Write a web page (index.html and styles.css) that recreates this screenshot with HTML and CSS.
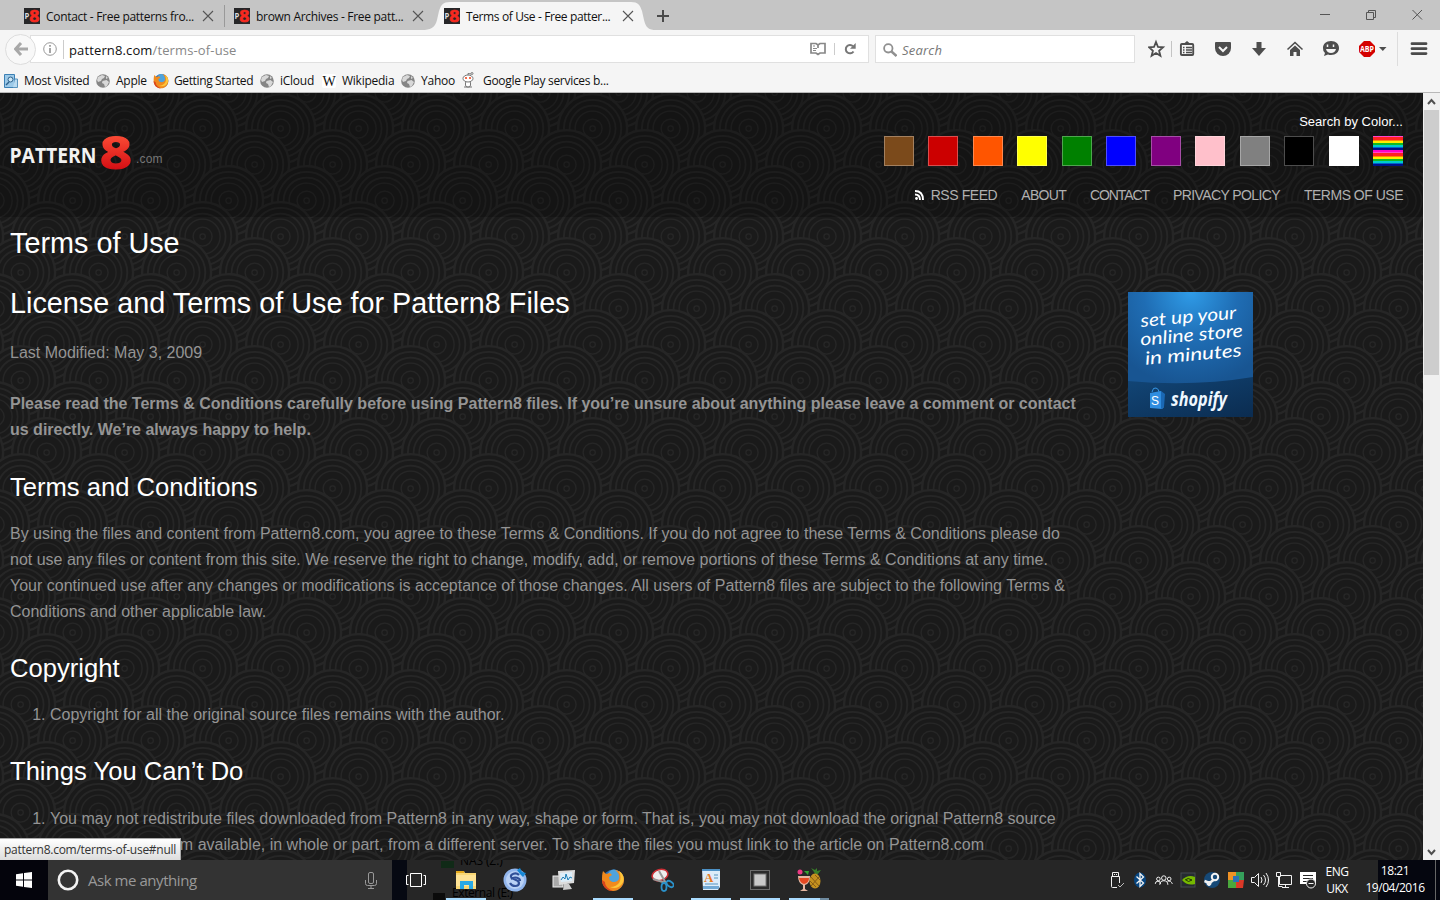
FILE: index.html
```html
<!DOCTYPE html>
<html lang="en">
<head>
<meta charset="utf-8">
<title>Terms of Use - Free patterns</title>
<link rel="stylesheet" href="styles.css">
</head>
<body>
<svg class="defs" width="0" height="0">
  <symbol id="fav" viewBox="0 0 16 16"><rect width="16" height="16" fill="#262628"/><text x=".5" y="10.500" font-family="Open Sans" font-weight="700" font-size="8" fill="#ddd" textLength="4.500" lengthAdjust="spacingAndGlyphs">P</text><text x="5.300" y="13.500" font-family="Open Sans" font-weight="700" font-size="15.500" fill="#f7291f" stroke="#f7291f" stroke-width=".6" textLength="9.800" lengthAdjust="spacingAndGlyphs">8</text></symbol>
  <symbol id="x" viewBox="0 0 12 12"><path d="M1 1l10 10M11 1L1 11" stroke="#555" stroke-width="1.1" fill="none"/></symbol>
  <symbol id="globe" viewBox="0 0 14 14"><circle cx="7" cy="7" r="6.800" fill="#858585"/><path d="M2 3l4-2 3 1-1 2-2 1-1 2-3 1-1-2zM6.500 7l4-1 2.500 2-2 4-2 1-1-3-2-1zM10 2l2 2-2 1z" fill="#d8d8d8"/></symbol>
  <symbol id="fox" viewBox="0 0 24 24"><circle cx="12.500" cy="12" r="10.500" fill="#2a6fb5"/><circle cx="13" cy="8" r="6.500" fill="#4fa3dc"/><path d="M2 3l3 3 4-1 2 2-3 2c0 3 2 5 5 5 2 0 4-1 5-3 1-4-1-7-4-9 6 1 9 5 9 10 0 6-5 11-11 11S1 18 1 12c0-3 0-6 1-9z" fill="#f08a1d"/><path d="M18 3c5 3 6 9 3 13-3 4-8 5-12 3 9 0 13-7 9-16z" fill="#fdc63a"/><path d="M1 12c0 6 4 11 11 11-5-2-8-5-8-9z" fill="#d9441c"/></symbol>
</svg>

<header class="chrome">
  <div class="tabs">
    <div class="tab"><svg class="fav"><use href="#fav"/></svg><span class="t1">Contact - Free patterns fro...</span><svg class="close"><use href="#x"/></svg></div>
    <div class="tab"><svg class="fav"><use href="#fav"/></svg><span class="t2">brown Archives - Free patt...</span><svg class="close"><use href="#x"/></svg></div>
    <div class="tab active"><svg class="shape" viewBox="0 0 240 28"><path d="M0 28c8 0 13-2 15-10l2-9c2-6 4-9 11-9H209c7 0 9 3 11 9l2 9c2 8 5 10 12 10z" fill="#f5f5f5"/></svg><svg class="fav"><use href="#fav"/></svg><span class="t3">Terms of Use - Free patter...</span><svg class="close"><use href="#x"/></svg></div>
    <svg class="plus" viewBox="0 0 12 12"><path d="M6 0v12M0 6h12" stroke="#4a4a4a" stroke-width="2"/></svg>
    <svg class="winbtns" width="104" height="16" viewBox="0 0 104 16"><path d="M0 8.500h10M46.500 6.500h7v7h-7zM48.500 6V4.500h7v7H54M92.500 4l9.500 9.500M102 4l-9.500 9.500" fill="none" stroke="#555"/></svg>
  </div>
  <div class="toolbar">
    <div class="back"><svg width="14" height="14" viewBox="0 0 14 14"><path d="M7 1L1.500 7 7 13M2 7h12" fill="none" stroke="#a8a8a8" stroke-width="3"/></svg></div>
    <div class="url">
      <svg class="info" viewBox="0 0 14 14"><circle cx="7" cy="7" r="6.300" fill="none" stroke="#999"/><path d="M7 6v5M7 3v1.700" stroke="#888" stroke-width="1.500"/></svg>
      <span class="addr">pattern8.com<i>/terms-of-use</i></span>
      <svg class="reader" viewBox="0 0 16 14"><path d="M1 1.500h5l2 1.500 2-1.500h5v9.500h-5l-2 1.500L6 11H1zM8 3v3" fill="none" stroke="#888" stroke-width="1.700"/><path d="M3 4h2M3 6.500h4M3 8.500h3" stroke="#888"/></svg>
      <svg class="reload" viewBox="0 0 12 12"><path d="M9.500 8.500A4.200 4.200 0 1 1 9 3.200" fill="none" stroke="#777" stroke-width="2"/><path d="M11.700 0v5.700H6z" fill="#777"/></svg>
    </div>
    <div class="search"><svg width="14" height="14" viewBox="0 0 14 14"><circle cx="5.300" cy="5.300" r="4.200" fill="none" stroke="#909090" stroke-width="1.800"/><path d="M8.500 8.500l5 4.500" stroke="#909090" stroke-width="2.400"/></svg><span>Search</span></div>
    <svg class="tools" width="292" height="34" viewBox="1148 32 292 34">
      <path d="M1156 42l2 5 5 .3-3.900 3.400 1.300 5.100-4.400-2.800-4.400 2.800 1.300-5.100-3.900-3.400 5-.3z" fill="none" stroke="#4d4d4d" stroke-width="1.800"/>
      <path d="M1171.500 41v16" stroke="#c4c4c4"/><path d="M1397.500 31v35" stroke="#ddd"/>
      <rect x="1180.900" y="44" width="12.300" height="11" rx="1" fill="none" stroke="#4d4d4d" stroke-width="1.900"/><path d="M1184 43.500l3-2.500 3 2.500z" fill="#4d4d4d"/><path d="M1183 47.500h1.500M1186 47.500h6M1183 50h1.500M1186 50h6M1183 52.500h1.500M1186 52.500h6" stroke="#4d4d4d" stroke-width="1.400" fill="none"/>
      <path d="M1216 42h14q1 0 1 1v5a8 8 0 0 1-16 0v-5q0-1 1-1z" fill="#4d4d4d"/><path d="M1219 47l4 4 4-4" fill="none" stroke="#f5f5f5" stroke-width="2"/>
      <path d="M1256.500 42h5v6h4.500l-7 8-7-8h4.500z" fill="#4d4d4d"/>
      <path d="M1287.500 49.500l7.500-7 7.500 7" fill="none" stroke="#4d4d4d" stroke-width="1.600"/><path d="M1290 50l5-4.500 5 4.500v6h-3.500v-4h-3v4h-3.500z" fill="#4d4d4d"/>
      <path d="M1331 41c5 0 8 3 8 7s-3 7-8 7c-1 0-2 0-3-.5l-4 1.500 1-3a6 6 0 0 1-2-5c0-4 3-7 8-7z" fill="#4d4d4d"/><path d="M1327.500 44.500v2.500M1333.500 44.500v2.500" stroke="#f5f5f5" stroke-width="1.500"/><path d="M1326 49h10q-1 4-5 4t-5-4z" fill="#f5f5f5"/>
      <path d="M1364 41h6l5 5v6l-5 5h-6l-5-5v-6z" fill="#d40000"/><text x="1360" y="52.300" font-family="Open Sans" font-weight="700" font-size="9" fill="#fff" textLength="14" lengthAdjust="spacingAndGlyphs">ABP</text><path d="M1379 47h7.500l-3.700 4z" fill="#4d4d4d"/>
      <path d="M1412 43.700h14M1412 48.700h14M1412 53.600h14" stroke="#4a4a4a" stroke-width="2.800" stroke-linecap="round"/>
    </svg>
  </div>
  <nav class="bookmarks">
    <a class="b1"><svg viewBox="0 0 14 14"><path d="M.5.500h10v13H.5z" fill="#9cc9e8" stroke="#3c80b4"/><path d="M11 5h2.500v8.500H9" fill="#b9daf0" stroke="#5a94bd"/><circle cx="6.500" cy="5.500" r="2.500" fill="#cde6f5" stroke="#2e628c"/><path d="M5 8l-3 3" stroke="#2e628c" stroke-width="1.500"/></svg><span>Most Visited</span></a>
    <a class="b2"><svg><use href="#globe"/></svg><span>Apple</span></a>
    <a class="b3"><svg class="foxs"><use href="#fox"/></svg><span>Getting Started</span></a>
    <a class="b4"><svg><use href="#globe"/></svg><span>iCloud</span></a>
    <a class="b5"><svg viewBox="0 0 14 14"><rect width="14" height="14" rx="2" fill="#fff"/><text x=".5" y="11.500" font-family="Liberation Serif" font-size="14" fill="#111" textLength="13" lengthAdjust="spacingAndGlyphs">W</text></svg><span>Wikipedia</span></a>
    <a class="b6"><svg><use href="#globe"/></svg><span>Yahoo</span></a>
    <a class="b7"><svg class="alien" viewBox="0 0 14 16"><path d="M7 5V1.500l3 .5" fill="none" stroke="#777"/><circle cx="11" cy="1.500" r="1" fill="#fff" stroke="#777"/><rect x="4.500" y="9" width="5" height="6" rx="2" fill="#fff" stroke="#777"/><ellipse cx="7" cy="6.500" rx="5" ry="3.500" fill="#fff" stroke="#777"/><circle cx="5" cy="6" r="1.100" fill="#f04a23"/><circle cx="9" cy="6" r="1.100" fill="#f04a23"/><path d="M3 15h8" stroke="#777"/></svg><span>Google Play services b...</span></a>
  </nav>
</header>

<div class="viewport">
  <div class="site">
    <div class="site-head">
      <svg class="logo" width="160" height="42" viewBox="0 0 160 42">
        <defs><linearGradient id="red" x1="0" y1="0" x2="0" y2="1"><stop offset=".2" stop-color="#ff5138"/><stop offset=".8" stop-color="#d40f14"/></linearGradient></defs>
        <text x="-.5" y="31" font-family="Open Sans" font-weight="700" font-size="21" fill="#f2f2f2" textLength="87" lengthAdjust="spacingAndGlyphs">PATTERN</text>
        <text x="90" y="36.700" font-family="Open Sans" font-weight="700" font-size="45.500" fill="url(#red)" stroke="url(#red)" stroke-width="1.200" textLength="32" lengthAdjust="spacingAndGlyphs">8</text>
        <text x="126" y="31" font-family="Liberation Sans" font-size="12" fill="#777" textLength="26.500">.com</text>
      </svg>
      <div class="head-right">
        <div class="by-color">Search by Color...</div>
        <div class="swatches"><b class="brown"></b><b class="red"></b><b class="orange"></b><b class="yellow"></b><b class="green"></b><b class="blue"></b><b class="purple"></b><b class="pink"></b><b class="gray"></b><b class="black"></b><b class="white"></b><b class="rainbow"></b></div>
        <div class="menu"><a class="rss"><svg width="9" height="10" viewBox="0 0 9 10"><circle cx="1.500" cy="8.500" r="1.400" fill="#fff"/><path d="M0 4.500q5 0 5 5.500M0 1q8 0 8 9" fill="none" stroke="#fff" stroke-width="1.900"/></svg>RSS FEED</a><a class="m2">ABOUT</a><a class="m3">CONTACT</a><a class="m4">PRIVACY POLICY</a><a class="m5">TERMS OF USE</a></div>
      </div>
    </div>
    <div class="body">
      <main>
        <h1>Terms of Use</h1>
        <h1 class="lic">License and Terms of Use for Pattern8 Files</h1>
        <p class="mod">Last Modified: May 3, 2009</p>
        <p class="bold">Please read the Terms &amp; Conditions carefully before using Pattern8 files. If you’re unsure about anything please leave a comment or contact<br>us directly. We’re always happy to help.</p>
        <h2>Terms and Conditions</h2>
        <p>By using the files and content from Pattern8.com, you agree to these Terms &amp; Conditions. If you do not agree to these Terms &amp; Conditions please do<br>not use any files or content from this site. We reserve the right to change, modify, add, or remove portions of these Terms &amp; Conditions at any time.<br>Your continued use after any changes or modifications is acceptance of those changes. All users of Pattern8 files are subject to the following Terms &amp;<br>Conditions and other applicable law.</p>
        <h2 class="copy">Copyright</h2>
        <ol><li>Copyright for all the original source files remains with the author.</li></ol>
        <h2 class="things">Things You Can’t Do</h2>
        <ol class="last"><li>You may not redistribute files downloaded from Pattern8 in any way, shape or form. That is, you may not download the orignal Pattern8 source<br>files and make them available, in whole or part, from a different server. To share the files you must link to the article on Pattern8.com</li></ol>
      </main>
      <aside>
        <svg width="125" height="125" viewBox="0 0 125 125">
          <defs><radialGradient id="sky" cx=".5" cy="0" r=".75"><stop offset="0" stop-color="#2f9ce8"/><stop offset=".5" stop-color="#1f6db4"/><stop offset="1" stop-color="#185592"/></radialGradient><linearGradient id="sea" x1="0" y1="0" x2="1" y2="1"><stop offset="0" stop-color="#124677"/><stop offset="1" stop-color="#0b2c50"/></linearGradient></defs>
          <rect width="125" height="125" fill="url(#sky)"/><path d="M0 89q65 6 125-4v40H0z" fill="url(#sea)"/>
          <g font-family="Lato" font-style="italic" fill="#fff" font-size="18" transform="rotate(-5)"><text x="10" y="36" textLength="96" lengthAdjust="spacingAndGlyphs">set up your</text><text x="8" y="54.500" textLength="103" lengthAdjust="spacingAndGlyphs">online store</text><text x="11" y="74" textLength="97" lengthAdjust="spacingAndGlyphs">in minutes</text></g>
          <path d="M24 100q1-5 4-4t3 4" fill="none" stroke="#3597e8"/><path d="M22 101l11-2 3 16-2 2-12-1z" fill="#2f8de0"/><path d="M33 99l4 3-1 13-3 2z" fill="#1a68b4"/><text x="23" y="113" font-family="Liberation Sans" font-size="12" fill="#fff">S</text>
          <text x="43" y="114" font-family="Open Sans" font-weight="700" font-style="italic" font-size="20" fill="#f0f8ff" textLength="56" lengthAdjust="spacingAndGlyphs">shopify</text>
        </svg>
      </aside>
    </div>
  </div>
  <div class="scroll"><svg width="17" height="17" viewBox="0 0 17 17"><path d="M5 11l3.500-4 3.500 4" fill="none" stroke="#505050" stroke-width="2"/></svg><div class="thumb"></div><svg class="down" width="17" height="17" viewBox="0 0 17 17"><path d="M5 7l3.500 4L12 7" fill="none" stroke="#505050" stroke-width="2"/></svg></div>
  <div class="status">pattern8.com/terms-of-use#null</div>
</div>

<footer class="taskbar">
  <div class="start"><svg width="16" height="16" viewBox="0 0 16 16"><path d="M0 2.300l7-1v6.200H0zM8 1.100L16 0v7.500H8zM0 8.500h7v6.200l-7-1zM8 8.500h8V16l-8-1.100z" fill="#fff"/></svg></div>
  <div class="cortana"><svg width="22" height="22" viewBox="0 0 22 22"><circle cx="11" cy="11" r="9.200" fill="none" stroke="#f2f2f2" stroke-width="2.600"/></svg><span>Ask me anything</span><svg class="mic" width="12" height="17" viewBox="0 0 12 17"><rect x="3.500" y=".5" width="5" height="11" rx="1.500" fill="none" stroke="#999"/><path d="M.5 8v3.500q0 2 2 2h7q2 0 2-2V8M6 13.500V16M3 16.500h6" fill="none" stroke="#999"/></svg></div>
  <div class="gap"></div>
  <div class="ghost g1">NAS (Z:)</div><div class="ghost g2">External (E:)</div><div class="ghost g3"></div><div class="ghost g4"></div>
  <div class="apps">
    <div class="view"><svg width="20" height="14" viewBox="0 0 20 14"><path d="M4.500.500h11v13h-11zM2.500 2.500h-2v9h2M17.500 2.500h2v9h-2" fill="none" stroke="#fff"/></svg></div>
    <div class="app on"><svg viewBox="0 0 24 24"><path d="M2 3h8l1 2h11v16H2z" fill="#f9d774"/><path d="M2 3h8v2H2z" fill="#e5a91c"/><path d="M2 7h20v11H2z" fill="#fee395"/><path d="M6 21v-8h13v8h-4v-4h-5v4z" fill="#29a9e6"/></svg></div>
    <div class="app"><svg viewBox="0 0 24 24"><circle cx="12" cy="12" r="11.500" fill="#91b5ec"/><circle cx="12" cy="12" r="9" fill="#b9d1f5"/><path d="M16 7c-3-3-9-1-8 2s8 2 8 6-7 4-9 0M8 11c4-3 9-1 9 2" fill="none" stroke="#304f98" stroke-width="2.200"/><path d="M14 2l3-2 2 4 4 1-3 4-3-3z" fill="#1688d6"/></svg></div>
    <div class="app"><svg viewBox="0 0 24 24"><rect x="1" y="8" width="10" height="11" fill="#aaa" stroke="#eee"/><path d="M6 3l17-1-1 13-15 2z" fill="#ddd"/><path d="M8 5l12-1v9L9 14z" fill="#dcedf8"/><path d="M9 12l2-3 2 2 1-5 2 6 2-3 2 1" fill="none" stroke="#1c7db6"/><path d="M12 16h5l3 5-9 1z" fill="#ccc"/></svg></div>
    <div class="app on"><svg viewBox="0 0 24 24"><use href="#fox"/></svg></div>
    <div class="app"><svg viewBox="0 0 24 24"><ellipse cx="10" cy="7" rx="8" ry="5.500" transform="rotate(-15 10 7)" fill="#eee" stroke="#cc2f36" stroke-width="1.600"/><path d="M9 3l8 14M3 11l13 4" stroke="#999" stroke-width="2"/><ellipse cx="14" cy="19" rx="2.500" ry="4" fill="none" stroke="#2b91c9" stroke-width="1.800"/><ellipse cx="20" cy="16" rx="4" ry="2.500" transform="rotate(35 20 16)" fill="none" stroke="#2b91c9" stroke-width="1.800"/></svg></div>
    <div class="app on"><svg viewBox="0 0 24 24"><path d="M3 1h18v18l-2 3H4z" fill="#dcecf9"/><path d="M3 1h18v2H3z" fill="#4c91c6"/><path d="M4 18h16v3H4z" fill="#72a9d4"/><text x="5" y="14" font-family="Liberation Serif" font-weight="700" font-size="13" fill="#e87b1e">A</text><path d="M15 7h4M15 10h4M6 16h13" stroke="#5793be"/></svg></div>
    <div class="app on"><svg viewBox="0 0 24 24"><rect x="2.500" y="2.500" width="19" height="19" fill="#2b2b2b" stroke="#6b6b6b"/><rect x="6" y="6" width="12" height="12" fill="#c9c9c9" stroke="#777"/></svg></div>
    <div class="app on part"><svg viewBox="0 0 24 24"><path d="M17 4l-3-4 4 2 2-2v3l4-1-3 4h-3z" fill="#39802a"/><ellipse cx="18" cy="13" rx="5.500" ry="7.500" fill="#c4911f"/><path d="M14 9l8 9M13 13l6 6M22 9l-8 9M18 7l5 5" stroke="#8a5e14"/><path d="M1 8h12q0 8-5 9v4l3 2H3l3-2v-4Q1 15 1 8z" fill="#e5b7a2"/><path d="M2 10h10q0 5-5 6-4-1-5-6z" fill="#e54821"/><circle cx="3" cy="4" r="2.500" fill="#ed3984"/><path d="M7 3l5 0-1 4z" fill="#34a332"/></svg></div>
  </div>
  <svg class="tray" width="216" height="24" viewBox="0 0 216 24" fill="none" stroke="#f2f2f2">
    <g transform="translate(4 0)">
    <path d="M7.500 8.500h8v11h-7q-1 0-1-1zM8.500 8V4.500h6V8M10.500 6v1M12.500 6v1"/><rect x="13" y="15" width="5" height="5" stroke="none" fill="#262626"/><path d="M14 17l2 2 4-4" stroke="#bbb"/>
    <ellipse cx="36" cy="12" rx="6" ry="7.500" fill="#07457f" stroke="none"/><path d="M32.500 8.500l7 6.500-3.500 3.500v-13l3.500 3.500-7 6.500" stroke-width="1.300"/>
    <g stroke-width="1.100" transform="translate(4 1.500) scale(.9)"><circle cx="56" cy="10.500" r="2"/><circle cx="62" cy="9.500" r="2.500"/><circle cx="68" cy="10.500" r="2"/><path d="M52.500 16q0-3 3-3t3 3M57.500 17q0-4.500 4.500-4.500t4.500 4.500M66 13q4-1 5.500 3"/></g>
    <rect x="77" y="5" width="14" height="14" fill="#252b30" stroke="#454b50"/><path d="M78 12q6-6 13-3v7q-8 2-13-4z" fill="#76b900" stroke="none"/><path d="M81 12q3-3 7 0-4 3-6 0" stroke="#203600"/>
    <circle cx="108" cy="12" r="8" fill="#164977" stroke="none"/><circle cx="111" cy="9" r="3.200" stroke-width="2"/><path d="M100.500 13l5 2 4-3" stroke-width="2.500"/><circle cx="105" cy="15.500" r="2" fill="#eee"/>
    <g stroke="none"><path d="M124 4h8v8h-8z" fill="#f09225"/><path d="M132 4h8v8h-8z" fill="#35a05b"/><path d="M124 12h8v8h-8z" fill="#4ba83c"/><path d="M132 12h8l-1 8h-7z" fill="#db3928"/><path d="M129 8h6v6h-6z" fill="#2b71b6"/></g>
    <path d="M147.500 9.500h3l4-4v13l-4-4h-3zM157 9q2 3 0 6M159.500 7q4 5 0 10M162 5q5 7 0 14"/>
    </g>
    <path d="M179.500 7.500h12v9h-12zM185.500 17v3M182 19.500h7"/><path d="M176.500 4.500h4v4h-4z" fill="#262626"/><path d="M178.500 9v9.500h4"/>
    <path d="M200 4h16v12h-16z" fill="#fff" stroke="none"/><path d="M203 7.500h10M203 10.500h10M203 13.500h5" stroke="#262626"/><circle cx="211" cy="15.500" r="4.500" fill="#262626"/><path d="M208.500 15.500h5"/>
  </svg>
  <div class="lang">ENG<br>UKX</div>
  <div class="clock">18:21<br>19/04/2016</div>
  <div class="peek"></div>
</footer>
</body>
</html>
```
FILE: styles.css
```css
* { box-sizing: border-box; }
body { margin: 0; width: 1440px; height: 900px; overflow: hidden; display: flex; flex-direction: column; background: #000; font-family: "Open Sans", "Noto Sans", sans-serif; font-size: 12px; color: #111; }
svg { display: block; flex: none; }
.defs { position: absolute; }
span, a { white-space: nowrap; }

.chrome { height: 93px; flex: none; background: #f5f5f5; border-bottom: 1px solid #b8b8b8; }
.tabs { height: 30px; background: #c5c5c5; display: flex; align-items: center; padding-left: 15px; }
.tab { width: 210px; height: 30px; display: flex; align-items: center; position: relative; padding: 2px 0 0 9px; letter-spacing: -.3px; }
.tab:first-child::after { content: ""; width: 1px; height: 22px; background: #999; position: absolute; right: 0; top: 5px; }
.tab span { margin-left: 6px; width: 155px; position: relative; }
.tab .t3 { letter-spacing: -.38px; }
.fav { width: 16px; height: 16px; position: relative; }
.close { width: 12px; height: 12px; position: relative; margin-left: 1px; }
.shape { position: absolute; left: -13px; top: 2px; width: 240px; height: 28px; }
.plus { width: 12px; height: 12px; margin: 2px 0 0 12px; }
.winbtns { margin: -3px 16px 0 auto; }

.toolbar { height: 38px; display: flex; align-items: center; }
.back { width: 31px; height: 31px; margin-left: 5px; border: 1px solid #ddd; border-radius: 50%; background: #f8f8f8; display: flex; align-items: center; justify-content: center; position: relative; z-index: 1; }
.url { width: 839px; height: 28px; margin-left: -6px; padding-left: 12px; border: 1px solid #e0e0e0; background: #fff; display: flex; align-items: center; }
.info { width: 14px; height: 14px; }
.addr { margin-left: 6px; border-left: 1px solid #ccc; padding: 1px 0 0 5px; width: 747px; font-size: 13px; line-height: 18px; letter-spacing: .13px; }
.addr i { font-style: normal; color: #888; }
.reader { width: 16px; height: 14px; }
.reload { width: 12px; height: 12px; margin-left: 8px; border-left: 1px solid #ccc; padding-left: 9px; box-sizing: content-box; }
.search { width: 260px; height: 28px; margin-left: 6px; padding: 1px 0 0 7px; border: 1px solid #e0e0e0; background: #fff; display: flex; align-items: center; gap: 5px; font-size: 13px; font-style: italic; color: #777; }
.search span { letter-spacing: .2px; }
.tools { margin-left: auto; }
.bookmarks { height: 25px; display: flex; align-items: center; padding-left: 4px; letter-spacing: -.25px; }
.bookmarks a { display: flex; align-items: center; gap: 6px; height: 24px; }
.bookmarks svg { width: 14px; height: 14px; }
.bookmarks .foxs { width: 16px; height: 16px; margin-left: -1px; margin-right: -1px; }
.bookmarks .alien { height: 16px; margin-top: -2px; }
.b1 { width: 92px; } .b2 { width: 58px; } .b3 { width: 106px; } .b4 { width: 62px; } .b5 { width: 79px; } .b6 { width: 60px; }
.b3 span { letter-spacing: -.38px; }
.b7 span { margin-left: 2px; letter-spacing: -.3px; }

.viewport { height: 767px; flex: none; display: flex; position: relative; overflow: hidden; }
.site { width: 1423px; flex: none; font-family: "Liberation Sans", Arial, sans-serif; color: #949494; background: #1a1a1a url("data:image/svg+xml,%3Csvg xmlns='http://www.w3.org/2000/svg' xmlns:xlink='http://www.w3.org/1999/xlink' width='78' height='108' viewBox='0 0 78 108'%3E%3Cdefs%3E%3Cg id='c' fill='none' stroke='%23262626' stroke-width='1.500'%3E%3Ccircle r='34.500' fill='%231a1a1a' stroke-width='2.300'/%3E%3Ccircle r='28.700' stroke-width='1.800'/%3E%3Ccircle r='23' stroke-width='1.600'/%3E%3Ccircle r='17.500' stroke-width='1.300'/%3E%3Ccircle r='9.500' stroke-width='1.300'/%3E%3Ccircle r='2.700' stroke-width='1.200'/%3E%3C/g%3E%3Cg id='r'%3E%3Cuse xlink:href='%23c' x='-78'/%3E%3Cuse xlink:href='%23c'/%3E%3Cuse xlink:href='%23c' x='78'/%3E%3C/g%3E%3C/defs%3E%3Crect width='78' height='108' fill='%231a1a1a'/%3E%3Cuse xlink:href='%23r' x='20.600' y='-36.400'/%3E%3Cuse xlink:href='%23r' x='-5.400' y='-.4'/%3E%3Cuse xlink:href='%23r' x='46.600' y='35.600'/%3E%3Cuse xlink:href='%23r' x='20.600' y='71.600'/%3E%3Cuse xlink:href='%23r' x='-5.400' y='107.600'/%3E%3Cuse xlink:href='%23r' x='46.600' y='143.600'/%3E%3C/svg%3E"); }
.site-head { height: 124px; background: rgba(0,0,0,.22); display: flex; justify-content: space-between; padding: 0 20px 0 10px; }
.logo { margin-top: 39px; }
.head-right { width: 519px; padding-top: 20px; }
.by-color { text-align: right; font-size: 13px; line-height: 17px; color: #fff; letter-spacing: .03px; }
.swatches { display: flex; justify-content: space-between; margin-top: 6px; }
.swatches b { width: 30px; height: 30px; border: 1px solid rgba(255,255,255,.3); }
.brown { background: #7b4a1b; } .red { background: #c00; } .orange { background: #f50; } .yellow { background: #ff0; } .green { background: #008000; } .blue { background: #00f; } .purple { background: #800080; } .pink { background: #ffc0cb; } .gray { background: #808080; } .black { background: #000; } .white { background: #fff; }
.swatches .rainbow { border: 0; background: repeating-linear-gradient(#f4c 0 1px, #f22 1px 4px, #f80 4px 5px, #fe0 5px 7px, #1b2 7px 9px, #0cc 9px 11px, #06c 11px 12px, #018 12px 14px, #f0c 14px 16px); }
.menu { display: flex; justify-content: flex-end; gap: 24px; margin-top: 21px; font-size: 14px; line-height: 17px; color: #b0b0b0; letter-spacing: -.48px; }
.rss { display: flex; gap: 7px; align-items: center; letter-spacing: -.42px; }
.m2 { letter-spacing: -.7px; }
.m3 { letter-spacing: -1.100px; }
.m4 { letter-spacing: -.6px; }
.m5 { letter-spacing: -.5px; }
.rss svg { margin-top: -2px; }
.body { display: flex; padding-left: 10px; }
main { width: 1118px; }
h1, h2 { margin: 0; color: #fff; font-weight: 400; line-height: 30px; }
h1 { font-size: 28.800px; margin-top: 11px; }
h1.lic { margin-top: 30px; }
h2 { font-size: 25.600px; margin-top: 29px; }
p, ol { margin: 19px 0 0; font-size: 16px; line-height: 26px; white-space: nowrap; }
.mod { margin-top: 22px; }
.bold { font-weight: 700; margin-top: 25px; }
.copy { margin-top: 28px; }
.things { margin-top: 28px; }
ol { padding-left: 40px; }
ol.last { margin-top: 20px; }
aside { padding-top: 75px; }
.scroll { width: 17px; background: #f0f0f0; display: flex; flex-direction: column; }
.thumb { height: 265px; width: 15px; margin-left: 1px; background: #cdcdcd; }
.down { margin-top: auto; }
.status { position: absolute; left: 0; bottom: 0; width: 181px; height: 22px; border: 1px solid #aaa; border-left: 0; border-bottom: 0; background: linear-gradient(#fff, #ddd); color: #333; padding-left: 4px; line-height: 22px; letter-spacing: -.27px; white-space: nowrap; }

.taskbar { height: 40px; flex: none; background: #262626; color: #fff; display: flex; position: relative; overflow: hidden; }
.start { width: 48px; background: #04040c; display: flex; align-items: center; justify-content: center; }
.cortana { width: 344px; background: #333; display: flex; align-items: center; padding: 0 15px 0 9px; font-size: 15px; color: #999; }
.cortana span { margin-left: 9px; letter-spacing: -.45px; }
.mic { margin-left: auto; }
.gap { width: 15px; background: #060912; }
.ghost { position: absolute; color: #000; white-space: nowrap; line-height: 16px; letter-spacing: -.4px; }
.g1 { left: 460px; top: -7px; letter-spacing: -.1px; }
.g2 { left: 452px; top: 25px; }
.g3 { left: 441px; top: 1px; width: 13px; height: 7px; background: #102a17; }
.g4 { left: 433px; top: 33px; width: 12px; height: 7px; background: #0b0b0b; }
.apps { display: flex; position: relative; }
.view { width: 35px; display: flex; align-items: center; margin-left: -1px; }
.app { width: 49px; display: flex; align-items: center; justify-content: center; position: relative; }
.app svg { width: 24px; height: 24px; }
.app.on::after { content: ""; position: absolute; left: 5px; bottom: 0; width: 40px; height: 2px; background: #aadcff; }
.app.part::after { background: linear-gradient(90deg, #aadcff 31px, #6f8ba0 31px); }
.tray { margin: 8px 0 0 auto; }
.lang, .clock { text-align: center; line-height: 17px; letter-spacing: -.45px; white-space: nowrap; }
.lang { width: 42px; padding-top: 3px; margin-right: 1px; }
.clock { width: 76px; padding: 2px 4px 0 0; background: linear-gradient(90deg, #262626 19px, #05060f 19px); }
.peek { width: 5px; background: #05060f; border-left: 1px solid #666; }
```
